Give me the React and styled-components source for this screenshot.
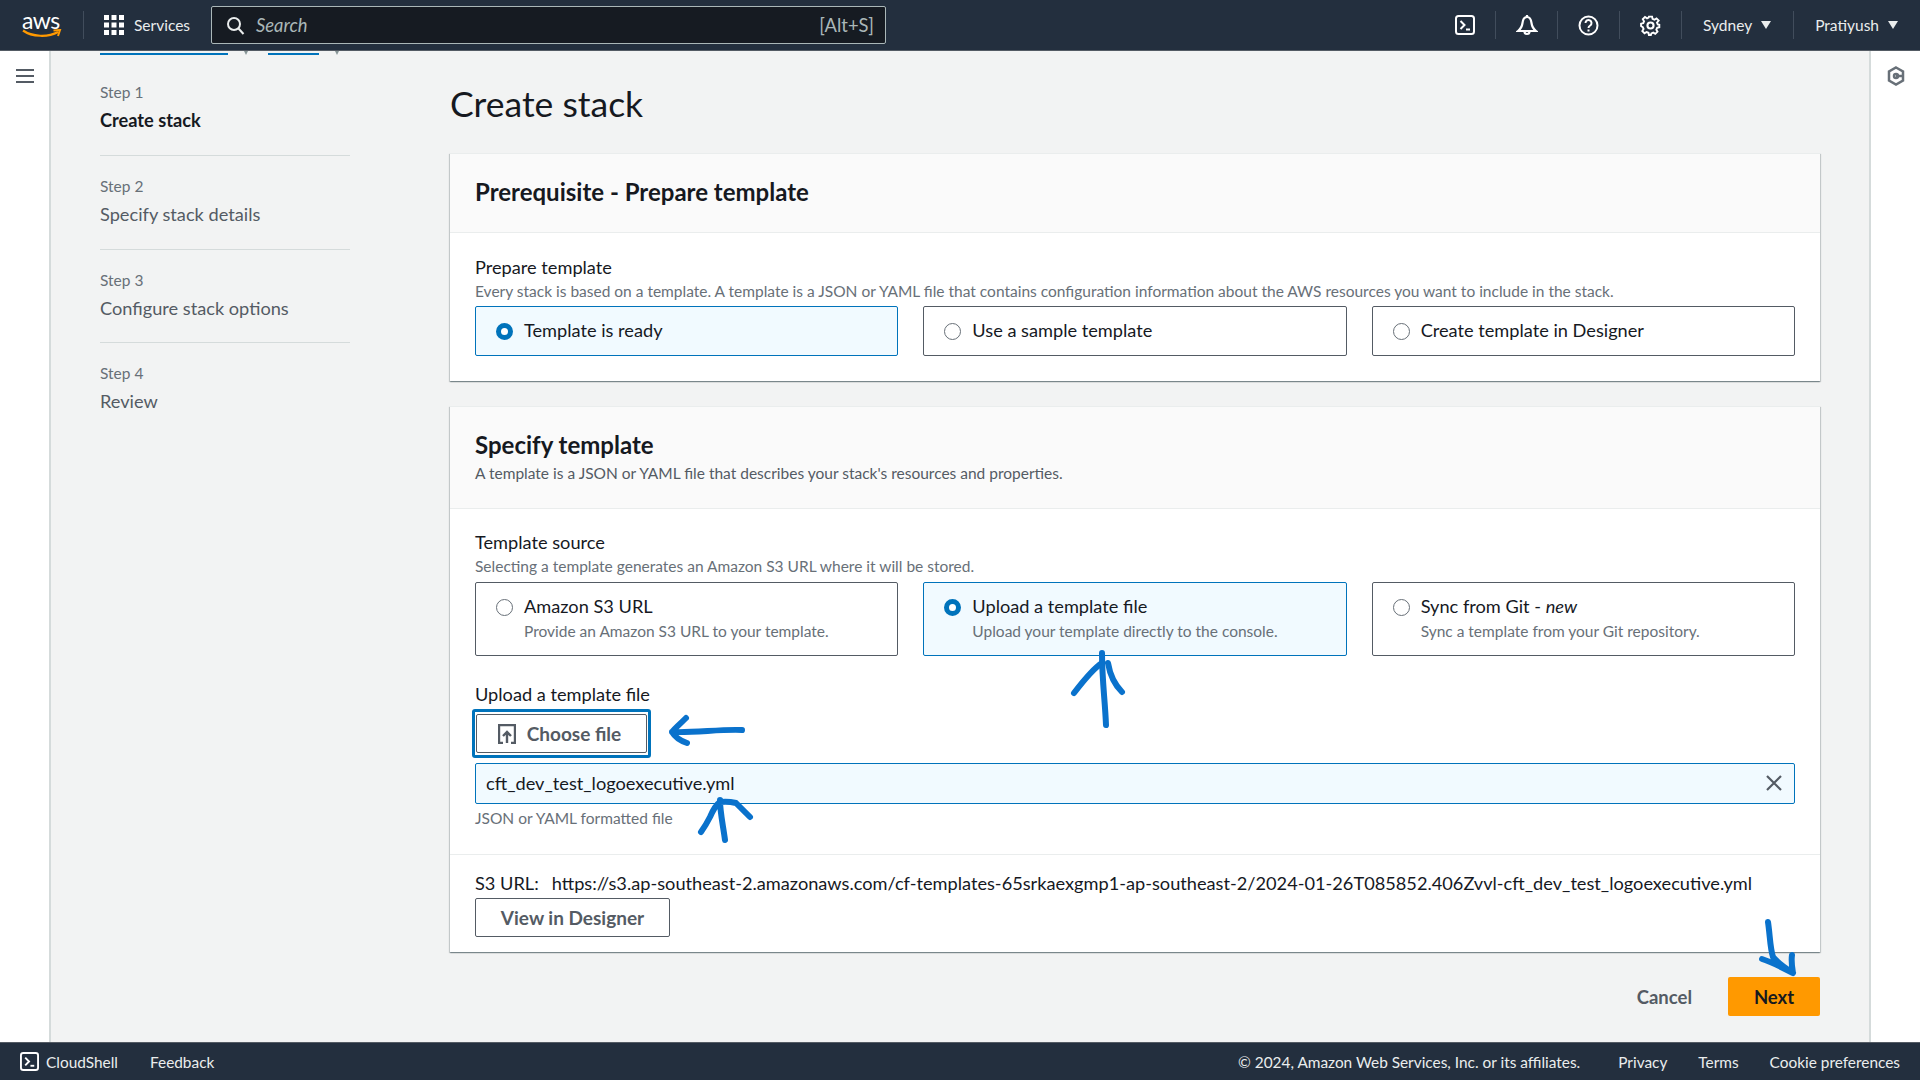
import React from "react";
import styled, { createGlobalStyle } from "styled-components";

const FONT = `Lato, "Noto Sans", sans-serif`;
const Global = createGlobalStyle`
  html, body { margin: 0; padding: 0; height: 100%; overflow: hidden; }
  body { font-family: ${FONT}; color: #16191f; background: #fff; }
  * { box-sizing: border-box; }
`;

const Page = styled.div`
  position: relative; width: 1920px; height: 1080px; display: flex; flex-direction: column; overflow: hidden;
`;
const TopNav = styled.header`
  height: 51px; flex: none; background: #232f3e; border-bottom: 1px solid #545b64; display: flex; align-items: center; color: #eaeded;
`;
const Logo = styled.div`
  width: 83px; height: 50px; padding-left: 22px; display: flex; flex-direction: column; justify-content: center;
  span { display: block; font-size: 23px; line-height: 17px; color: #fff; letter-spacing: -0.5px; }
  svg { display: block; }
`;
const Sep = styled.div`width: 1px; height: 28px; background: #414d5c; flex: none;`;
const ServicesBtn = styled.div`
  display: flex; align-items: center; gap: 10px; padding-left: 20px; width: 127px; font-size: 15.5px;
`;
const SearchBox = styled.div`
  width: 675px; height: 38px; background: #161b22; border: 1px solid #aab7b8; border-radius: 2px; display: flex; align-items: center;
  padding: 0 11px 0 14px; color: #aab7b8; font-size: 18.4px;
  em { margin-left: 11px; flex: 1; }
`;
const NavRight = styled.div`margin-left: auto; display: flex; align-items: center; height: 50px;`;
const NavIcon = styled.div`
  width: 61px; display: flex; justify-content: center; align-items: center;
`;
const NavMenu = styled.div`
  display: flex; align-items: center; gap: 9px; font-size: 15.5px; padding: 0 ${(p) => p.$pr}px 0 ${(p) => p.$pl}px; color: #eaeded;
`;
const Caret = styled.i`
  width: 0; height: 0; border-left: 5.5px solid transparent; border-right: 5.5px solid transparent; border-top: 8px solid #eaeded;
`;
const Middle = styled.div`flex: 1; display: flex; min-height: 0;`;
const Rail = styled.aside`
  width: 51px; flex: none; background: #fff; display: flex; justify-content: center; padding-top: 15px;
  border-${(p) => p.$side}: 2px solid #d5dbdb;
  svg { display: block; }
`;
const MenuGlyph = styled.svg`margin-top: 3px;`;
const Main = styled.main`flex: 1; background: #f2f3f3; display: flex; flex-direction: column; min-width: 0;`;
const Crumbs = styled.div`height: 5px; padding-left: 49px; display: flex; align-items: flex-start; flex: none;`;
const CrumbLink = styled.div`
  height: 2px; width: ${(p) => p.$w}px; background: #0073bb; margin-top: 2px; margin-right: 14px;
`;
const CrumbMark = styled.div`
  width: 0; height: 0; margin: 0 20px 0 2px; border-left: 2px solid transparent; border-right: 2px solid transparent; border-top: 4px solid #879596;
`;
const Columns = styled.div`flex: 1; display: flex; padding: 0 49px; gap: 100px;`;
const Steps = styled.nav`width: 250px; flex: none; padding-top: 6px;`;
const Step = styled.div`
  height: 93.8px; padding-top: 18px;
  border-bottom: ${(p) => (p.$last ? "none" : "1px solid #d5dbdb")};
`;
const StepNum = styled.div`font-size: 15.500px; line-height: 24px; color: #687078;`;
const StepName = styled.div`
  margin-top: 4px; font-size: 18.2px; line-height: 24px; color: ${(p) => (p.$active ? "#16191f" : "#545b64")}; font-weight: ${(p) => (p.$active ? 700 : 400)};
`;
const Content = styled.div`flex: 1; min-width: 0;`;
const H1 = styled.h1`margin: 26px 0 27px; font-size: 35.500px; line-height: 44px; font-weight: 400;`;
const Card = styled.section`
  background: #fff; margin-bottom: 25px;
  box-shadow: 0 1px 1px 0 rgba(0,28,36,.3), 1px 1px 1px 0 rgba(0,28,36,.15), -1px 1px 1px 0 rgba(0,28,36,.15);
  border-top: 1px solid #eaeded;
`;
const CardHead = styled.div`
  height: ${(p) => p.$h}px; background: #fafafa; border-bottom: 1px solid #eaeded; padding: ${(p) => p.$pt}px 25px 0;
`;
const H2 = styled.h2`margin: 0; font-size: 24px; line-height: 30px; font-weight: 700;`;
const CardDesc = styled.div`margin-top: 3px; font-size: 15.500px; line-height: 20px; color: #545b64;`;
const CardBody = styled.div`padding: ${(p) => p.$pt}px 25px ${(p) => p.$pb || 0}px;`;
const Label = styled.div`font-size: 18.2px; line-height: 24px; margin-top: ${(p) => p.$mt || 0}px;`;
const Help = styled.div`
  margin-top: ${(p) => p.$mt}px; font-size: 15.500px; line-height: 20px; color: #687078;
`;
const Tiles = styled.div`
  display: grid; grid-template-columns: repeat(3, 1fr); gap: 25px; margin-top: ${(p) => p.$mt}px;
`;
const Tile = styled.div`
  height: ${(p) => p.$h}px; border: 1px solid ${(p) => (p.$on ? "#0073bb" : "#545b64")}; border-radius: 2px;
  background: ${(p) => (p.$on ? "#f1faff" : "#fff")}; display: flex; padding: ${(p) => p.$pt}px 20px 0;
`;
const Radio = styled.div`
  width: 17px; height: 17px; margin-top: 5px; border-radius: 50%; flex: none; background: #fff;
  border: ${(p) => (p.$on ? "5px solid #0073bb" : "1px solid #687078")};
`;
const TileText = styled.div`margin-left: 11px;`;
const TileTitle = styled.div`font-size: 18.2px; line-height: 24px;`;
const TileSub = styled.div`font-size: 15.500px; line-height: 20px; color: #687078; margin-top: 3px;`;
const FocusRing = styled.div`
  margin: 3px 0 0 -3px; width: 179px; height: 49px; border: 3px solid #0073bb; border-radius: 3px; padding: 2px 1px;
`;
const GhostBtn = styled.div`
  height: ${(p) => p.$h}px; width: ${(p) => p.$w}px; margin-top: ${(p) => p.$mt || 0}px; border: 1px solid #545b64; border-radius: 2px; background: #fff; color: #545b64;
  padding-right: ${(p) => p.$pr || 0}px;
  display: flex; align-items: center; justify-content: center; gap: 11px; font-size: 19px; font-weight: 700;
`;
const FileBox = styled.div`
  margin-top: 5px; height: 41px; border: 1px solid #0073bb; border-radius: 2px; background: #f1faff; padding: 0 12px 2px 10px;
  display: flex; align-items: center; justify-content: space-between; font-size: 18.2px; svg { display: block; }
`;
const Divider = styled.div`margin: 26px -25px 0; height: 1px; background: #eaeded;`;
const S3Row = styled.div`display: flex; font-size: 18.2px; line-height: 24px; margin-top: 16px; gap: 13px; white-space: nowrap;`;
const Actions = styled.div`display: flex; justify-content: flex-end; align-items: center; gap: 36px;`;
const CancelBtn = styled.div`font-size: 18.5px; font-weight: 700; color: #545b64;`;
const NextBtn = styled.div`
  width: 92px; height: 39px; background: #ff9900; border-radius: 2px; display: flex; align-items: center; justify-content: center;
  font-size: 18.5px; font-weight: 700; color: #16191f;
`;
const Footer = styled.footer`
  height: 38px; flex: none; background: #232f3e; border-top: 1px solid #545b64; color: #eaeded; display: flex; align-items: center;
  font-size: 15.400px; padding: 0 20px;
`;
const FootLeft = styled.div`display: flex; align-items: center; gap: 7px; margin-right: 32px; svg { display: block; }`;
const FootRight = styled.div`margin-left: auto; display: flex; gap: 31px;`;
const Copyright = styled.span`margin-right: 7px;`;
const Scribbles = styled.svg`position: absolute; left: 0; top: 0; pointer-events: none;`;

const ShellIcon = ({ size = 20 }) => (
  <svg width={size} height={size} viewBox="0 0 20 20" fill="none" stroke="#fff" strokeWidth="2">
    <rect x="1" y="1" width="18" height="18" rx="2.500" />
    <path d="M5.500 6 9.500 10 5.500 14" />
    <path d="M11 14.500h4" />
  </svg>
);
const GridIcon = () => (
  <svg width="20" height="20" viewBox="0 0 20 20" fill="#fff">
    {[0, 7.5, 15].flatMap((y) => [0, 7.5, 15].map((x) => <rect key={`${x}-${y}`} x={x} y={y} width="5" height="5" />))}
  </svg>
);

export default function App() {
  return (
    <Page>
      <Global />
      <TopNav>
        <Logo>
          <span>aws</span>
          <svg width="40" height="9" viewBox="0 0 40 9" fill="none">
            <path d="M1 1.500C10 8 26 8.500 36 3" stroke="#ff9900" strokeWidth="2.200" />
            <path d="M31.500 1.500 38 1 36 7" stroke="#ff9900" strokeWidth="2" />
          </svg>
        </Logo>
        <Sep />
        <ServicesBtn><GridIcon />Services</ServicesBtn>
        <SearchBox>
          <svg width="19" height="19" viewBox="0 0 19 19" fill="none" stroke="#eaeded" strokeWidth="2">
            <circle cx="8" cy="8" r="6" /><path d="m12.500 12.500 5 5.500" />
          </svg>
          <em>Search</em>
          <span>[Alt+S]</span>
        </SearchBox>
        <NavRight>
          <NavIcon><ShellIcon /></NavIcon>
          <Sep />
          <NavIcon>
            <svg width="22" height="22" viewBox="0 0 22 22" fill="none" stroke="#fff" strokeWidth="2.200">
              <path d="M2 17c2.500-2 4-4 4.500-8C7 5 9 3 11 3s4 2 4.500 6c.5 4 2 6 4.500 8z" />
              <path d="M11 1v2M8.500 17.500a2.500 2.500 0 0 0 5 0" />
            </svg>
          </NavIcon>
          <Sep />
          <NavIcon>
            <svg width="21" height="21" viewBox="0 0 21 21" fill="none" stroke="#fff" strokeWidth="2">
              <circle cx="10.500" cy="10.500" r="9" />
              <path d="M7.500 8a3 3 0 1 1 4.700 2.500c-1 .7-1.700 1.200-1.700 2.500" />
              <path d="M10.500 14.500v2" />
            </svg>
          </NavIcon>
          <Sep />
          <NavIcon>
            <svg width="21" height="21" viewBox="0 0 24 24" fill="none" stroke="#fff" strokeWidth="2.400">
              <circle cx="12" cy="12" r="3.500" />
              <path d="M10 2h4l.6 3 2.400 1 2.600-1.700 2.800 2.800L20.200 9.700l1 2.300 2 .5v3l-2.800.8-1 2.400 1.500 2.500-2.800 2.800-2.600-1.600-2.400 1-.6 2H10l-.6-2.800-2.400-1-2.600 1.600-2.800-2.800 1.600-2.600-1-2.400L0 14v-3l2.800-.7 1-2.400L2.200 5.300 5 2.500l2.600 1.700 2-1z" transform="translate(1.200 0) scale(.9)" />
            </svg>
          </NavIcon>
          <Sep />
          <NavMenu $pl={21} $pr={22}>Sydney<Caret /></NavMenu>
          <Sep />
          <NavMenu $pl={21} $pr={22}>Pratiyush<Caret /></NavMenu>
        </NavRight>
      </TopNav>
      <Middle>
        <Rail $side="right">
          <MenuGlyph width="18" height="14" viewBox="0 0 18 14" fill="#545b64">
            <rect width="18" height="2" /><rect y="6" width="18" height="2" /><rect y="12" width="18" height="2" />
          </MenuGlyph>
        </Rail>
        <Main>
          <Crumbs>
            <CrumbLink $w={128} /><CrumbMark />
            <CrumbLink $w={51} /><CrumbMark />
          </Crumbs>
          <Columns>
            <Steps>
              <Step><StepNum>Step 1</StepNum><StepName $active>Create stack</StepName></Step>
              <Step><StepNum>Step 2</StepNum><StepName>Specify stack details</StepName></Step>
              <Step><StepNum>Step 3</StepNum><StepName>Configure stack options</StepName></Step>
              <Step $last><StepNum>Step 4</StepNum><StepName>Review</StepName></Step>
            </Steps>
            <Content>
              <H1>Create stack</H1>
              <Card>
                <CardHead $h={79} $pt={23}><H2>Prerequisite - Prepare template</H2></CardHead>
                <CardBody $pt={22} $pb={25}>
                  <Label>Prepare template</Label>
                  <Help $mt={2}>Every stack is based on a template. A template is a JSON or YAML file that contains configuration information about the AWS resources you want to include in the stack.</Help>
                  <Tiles $mt={5}>
                    <Tile $on $h={50} $pt={11}><Radio $on /><TileText><TileTitle>Template is ready</TileTitle></TileText></Tile>
                    <Tile $h={50} $pt={11}><Radio /><TileText><TileTitle>Use a sample template</TileTitle></TileText></Tile>
                    <Tile $h={50} $pt={11}><Radio /><TileText><TileTitle>Create template in Designer</TileTitle></TileText></Tile>
                  </Tiles>
                </CardBody>
              </Card>
              <Card>
                <CardHead $h={102} $pt={23}>
                  <H2>Specify template</H2>
                  <CardDesc>A template is a JSON or YAML file that describes your stack's resources and properties.</CardDesc>
                </CardHead>
                <CardBody $pt={21} $pb={15}>
                  <Label>Template source</Label>
                  <Help $mt={2}>Selecting a template generates an Amazon S3 URL where it will be stored.</Help>
                  <Tiles $mt={6}>
                    <Tile $h={74} $pt={11}><Radio /><TileText><TileTitle>Amazon S3 URL</TileTitle><TileSub>Provide an Amazon S3 URL to your template.</TileSub></TileText></Tile>
                    <Tile $on $h={74} $pt={11}><Radio $on /><TileText><TileTitle>Upload a template file</TileTitle><TileSub>Upload your template directly to the console.</TileSub></TileText></Tile>
                    <Tile $h={74} $pt={11}><Radio /><TileText><TileTitle>Sync from Git - <em>new</em></TileTitle><TileSub>Sync a template from your Git repository.</TileSub></TileText></Tile>
                  </Tiles>
                  <Label $mt={26}>Upload a template file</Label>
                  <FocusRing>
                    <GhostBtn $h={39} $w={171} $pr={4}>
                      <svg width="18" height="20" viewBox="0 0 18 20" fill="none" stroke="#545b64" strokeWidth="2.400">
                        <path d="M5 19H1V1h16v18h-4" /><path d="M9 19V8M5 12l4-4 4 4" />
                      </svg>
                      Choose file
                    </GhostBtn>
                  </FocusRing>
                  <FileBox>
                    <span>cft_dev_test_logoexecutive.yml</span>
                    <svg width="16" height="16" viewBox="0 0 16 16" stroke="#545b64" strokeWidth="2.200" fill="none"><path d="m1 1 14 14M15 1 1 15" /></svg>
                  </FileBox>
                  <Help $mt={4}>JSON or YAML formatted file</Help>
                  <Divider />
                  <S3Row><span>S3 URL:</span><span>https://s3.ap-southeast-2.amazonaws.com/cf-templates-65srkaexgmp1-ap-southeast-2/2024-01-26T085852.406Zvvl-cft_dev_test_logoexecutive.yml</span></S3Row>
                  <GhostBtn $h={39} $w={195} $mt={3}>View in Designer</GhostBtn>
                </CardBody>
              </Card>
              <Actions><CancelBtn>Cancel</CancelBtn><NextBtn>Next</NextBtn></Actions>
            </Content>
          </Columns>
        </Main>
        <Rail $side="left">
          <svg width="18" height="20" viewBox="0 0 18 20" fill="none" stroke="#687078" strokeWidth="2.500">
            <path d="M9 1.500 16 5.500v9L9 18.500 2 14.500v-9z" />
            <circle cx="9" cy="10" r="2" />
            <path d="M9 10h7" />
          </svg>
        </Rail>
      </Middle>
      <Footer>
        <FootLeft><ShellIcon size={19} />CloudShell</FootLeft>
        <div>Feedback</div>
        <FootRight>
          <Copyright>© 2024, Amazon Web Services, Inc. or its affiliates.</Copyright>
          <span>Privacy</span><span>Terms</span><span>Cookie preferences</span>
        </FootRight>
      </Footer>
      <Scribbles width="1920" height="1080" fill="none" stroke="#0a72cc" strokeWidth="6" strokeLinecap="round" strokeLinejoin="round">
        <path d="M1102 653C1102 680 1105 700 1106 725" />
        <path d="M1074 693C1084 680 1094 668 1102 663M1108 663C1110 675 1115 685 1122 692" />
        <path d="M742 730C720 729 695 733 672 732M686 718C680 724 675 728 672 732C675 737 681 741 687 743" />
        <path d="M725 840C723 825 720 812 720 800M701 832C706 825 706 825 710 817C713 810 716 805 720 802C727 801 732 802 736 803C741 808 746 813 750 817" />
        <path d="M1768 922C1770 935 1770 948 1773 957C1778 963 1785 968 1793 973M1762 959C1772 962 1783 968 1793 973C1792 967 1791 962 1792 955" />
      </Scribbles>
    </Page>
  );
}
